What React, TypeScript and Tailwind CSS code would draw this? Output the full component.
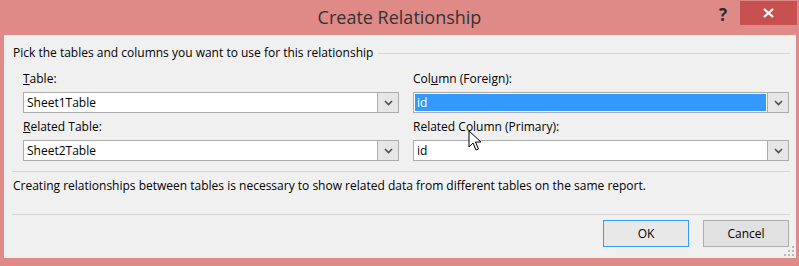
import React from 'react'

const font = { fontFamily: '"Open Sans", "Noto Sans", sans-serif' }

function Chevron() {
  return (
    <svg width="9" height="6" viewBox="0 0 9 6" className="block">
      <path d="M1 1 L4.5 4.5 L8 1" fill="none" stroke="#505050" strokeWidth="1.6" />
    </svg>
  )
}

function Combo({ value, selected }: { value: string; selected?: boolean }) {
  return (
    <div className="flex h-[21px] border border-[#acacac] bg-white">
      <div className="flex flex-1 items-stretch p-[1px]">
        <div
          className={
            selected
              ? 'flex flex-1 items-center bg-[#3399ff] pl-[2px] text-white'
              : 'flex flex-1 items-center pl-[2px] text-black'
          }
        >
          {value}
        </div>
      </div>
      <div className="flex w-[21px] items-center justify-center border-l border-[#acacac] bg-[#e6e6e6]">
        <Chevron />
      </div>
    </div>
  )
}

function Field({ label, value, selected }: { label: React.ReactNode; value: string; selected?: boolean }) {
  return (
    <div className="flex flex-col">
      <div className="h-[16px] leading-[16px]">{label}</div>
      <div className="mt-[5px]">
        <Combo value={value} selected={selected} />
      </div>
    </div>
  )
}

export default function App() {
  return (
    <div
      className="relative flex h-[266px] w-[799px] flex-col bg-[#e08a87] text-[12px] text-black"
      style={font}
    >
      {/* Title bar */}
      <div className="relative flex h-[35px] items-center justify-center">
        <span className="text-[18px] text-[#333333]">Create Relationship</span>
        <span className="absolute left-[719px] top-[2px] text-[17px] font-bold text-[#2b2b2b]">?</span>
        <div className="absolute right-[2px] top-[1px] flex h-[24px] w-[57px] items-center justify-center bg-[#c75050]">
          <svg width="11" height="10" viewBox="0 0 11 10">
            <path d="M1 1 L10 9 M10 1 L1 9" stroke="white" strokeWidth="2.2" />
          </svg>
        </div>
      </div>

      {/* Client area */}
      <div className="relative mb-[8px] ml-[4px] mr-[3px] flex flex-1 flex-col bg-[#f0f0f0] pt-[10px]">
        <div className="flex h-[16px] items-center pl-[9px] pr-[6px]">
          <span className="leading-[16px]">Pick the tables and columns you want to use for this relationship</span>
          <div className="ml-[5px] h-px flex-1 bg-[#d5d5d5]" />
        </div>

        <div className="mt-[10px] grid grid-cols-2 gap-x-[14px] gap-y-[6px] pl-[19px] pr-[7px]">
          <Field label={<><span className="underline">T</span>able:</>} value="Sheet1Table" />
          <Field
            label={<>Col<span className="underline">u</span>mn (Foreign):</>}
            value="id"
            selected
          />
          <Field label={<><span className="underline">R</span>elated Table:</>} value="Sheet2Table" />
          <Field label="Related Column (Primary):" value="id" />
        </div>

        <div className="mx-[8px] mr-[6px] mt-[10px] h-px bg-[#d5d5d5]" />

        <div className="mt-[6px] h-[16px] pl-[9px] leading-[16px]">
          Creating relationships between tables is necessary to show related data from different tables on the same report.
        </div>

        <div className="mx-[8px] mr-[6px] mt-[20px] h-px bg-[#d5d5d5]" />

        <div className="mt-[5px] flex justify-end gap-[14px] pr-[7px]">
          <button className="flex h-[27px] w-[86px] items-center justify-center border border-[#3399ff] bg-[#e8e8e8] text-black">
            OK
          </button>
          <button className="flex h-[27px] w-[86px] items-center justify-center border border-[#adadad] bg-[#e1e1e1] text-black">
            Cancel
          </button>
        </div>

        {/* Resize grip */}
        <svg className="absolute bottom-[1px] right-[1px]" width="11" height="11" viewBox="0 0 11 11">
          <g fill="#b8b8b8">
            <rect x="8" y="0" width="2" height="2" />
            <rect x="4" y="4" width="2" height="2" />
            <rect x="8" y="4" width="2" height="2" />
            <rect x="0" y="8" width="2" height="2" />
            <rect x="4" y="8" width="2" height="2" />
            <rect x="8" y="8" width="2" height="2" />
          </g>
        </svg>
      </div>

      {/* Mouse cursor */}
      <svg className="absolute left-[468px] top-[130px]" width="14" height="22" viewBox="0 0 14 22">
        <path
          d="M1 1 L1 17 L5 13 L8 20 L10.5 19 L7.5 12 L13 12 Z"
          fill="white"
          stroke="black"
          strokeWidth="1"
          strokeLinejoin="miter"
        />
      </svg>
    </div>
  )
}
